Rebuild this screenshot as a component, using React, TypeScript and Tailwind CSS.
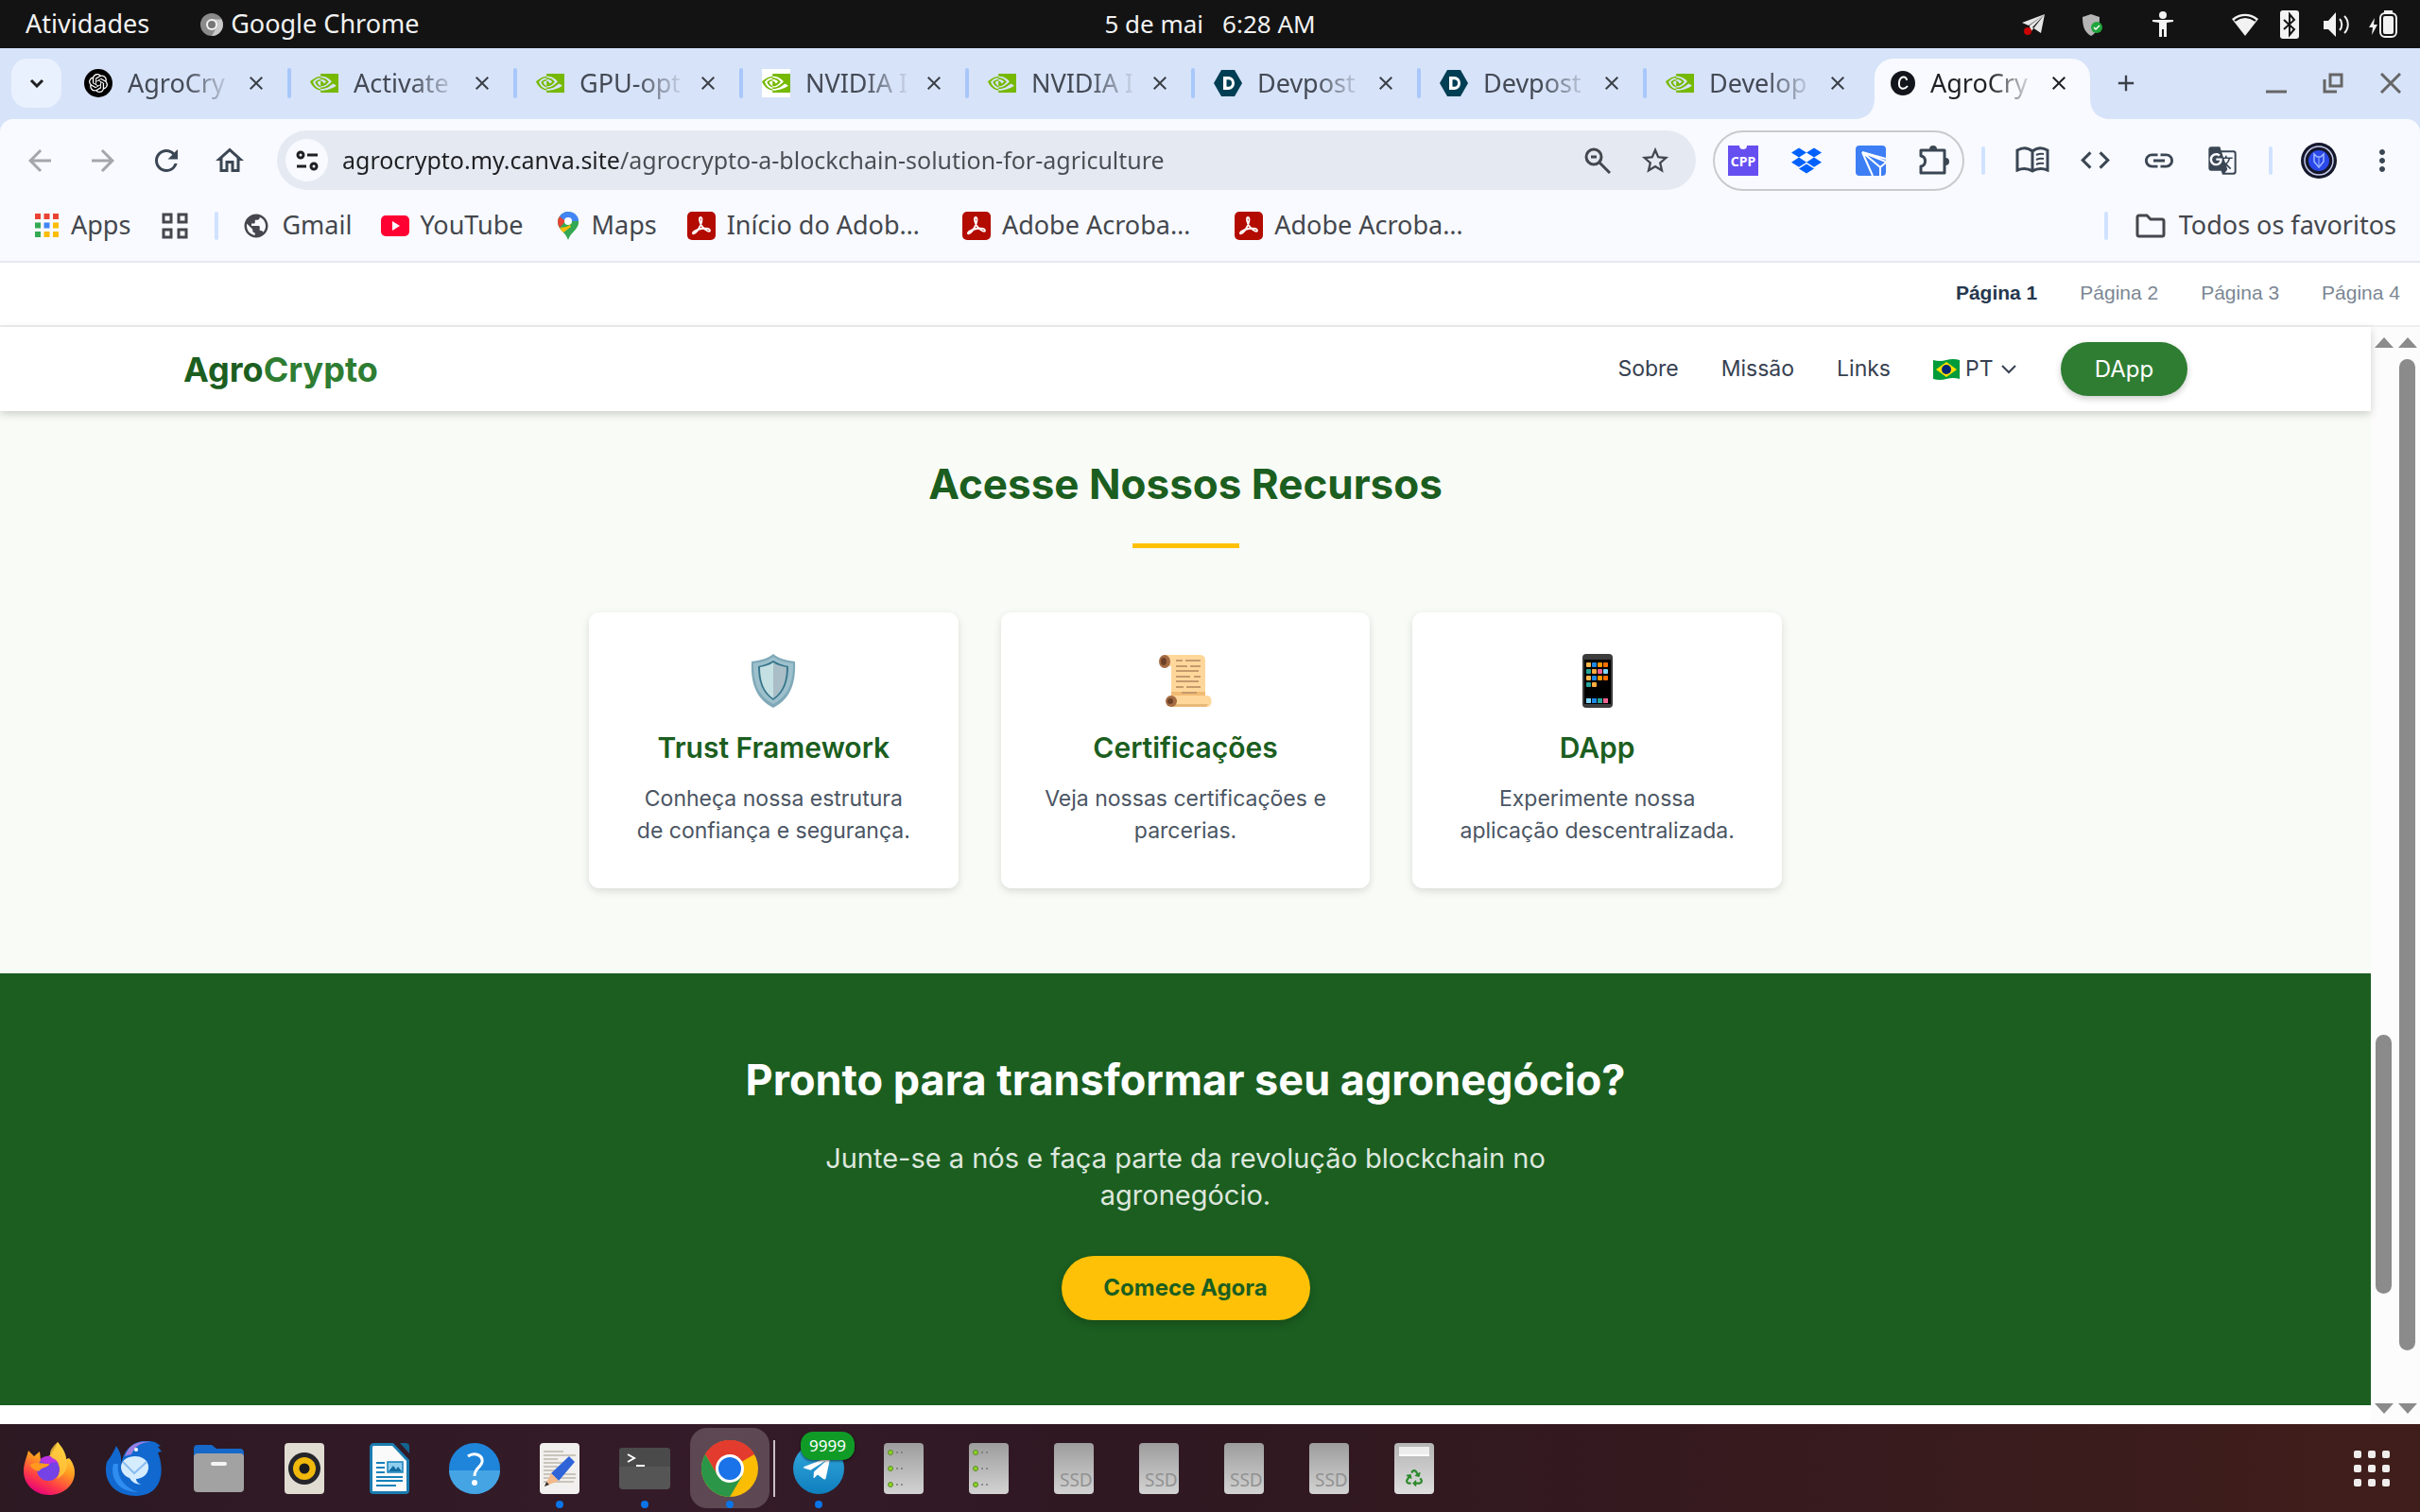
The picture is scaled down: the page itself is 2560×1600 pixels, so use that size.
import type { ReactNode } from "react"
import { SiDropbox, SiNvidia, SiOpenai } from "react-icons/si"
import { FaRecycle, FaTelegramPlane } from "react-icons/fa"
import {
  MdAdd,
  MdArrowBack,
  MdArrowForward,
  MdClose,
  MdCode,
  MdGTranslate,
  MdLink,
  MdMoreVert,
  MdOutlineHome,
  MdPublic,
  MdRefresh,
  MdStarBorder,
} from "react-icons/md"

type Tab = { title: string; icon: ReactNode }

const nvidia = <SiNvidia className="size-[30px] text-[#76b900]" />

const devpost = (
  <svg viewBox="0 0 30 30" className="size-[30px]">
    <path d="M8 1h14l8 14-8 14H8L0 15z" fill="#003e54" />
    <path d="M10 8h5.500a6.500 7 0 0 1 0 14H10zm3.500 3.300v7.400h2a3.500 3.700 0 0 0 0-7.400z" fill="#fff" />
  </svg>
)

const tabs: Tab[] = [
  {
    title: "AgroCry",
    icon: (
      <span className="flex size-[30px] items-center justify-center rounded-full bg-black">
        <SiOpenai className="size-5 text-white" />
      </span>
    ),
  },
  { title: "Activate", icon: nvidia },
  { title: "GPU-opt", icon: nvidia },
  { title: "NVIDIA I", icon: <span className="bg-white">{nvidia}</span> },
  { title: "NVIDIA I", icon: nvidia },
  { title: "Devpost", icon: devpost },
  { title: "Devpost", icon: devpost },
  { title: "Develop", icon: nvidia },
]

const resources = [
  { title: "Trust Framework", text: "Conheça nossa estrutura de confiança e segurança.", icon: <ShieldIcon /> },
  { title: "Certificações", text: "Veja nossas certificações e parcerias.", icon: <ScrollIcon /> },
  { title: "DApp", text: "Experimente nossa aplicação descentralizada.", icon: <PhoneIcon /> },
]

function ShieldIcon() {
  return (
    <svg viewBox="0 0 48 57" className="h-[57px] w-12">
      <path d="M24 0c6 5 14 7 23 8 1 22-4 39-23 49C5 47 0 30 1 8c9-1 17-3 23-8z" fill="#7fa9b8" />
      <path d="M24 3c6 4 13 6 21 7 0 19-4 34-21 43C7 44 3 29 3 10c8-1 15-3 21-7z" fill="#9dc0cc" />
      <path d="M24 7c5 3 10 5 16 6 0 16-4 28-16 36C12 41 8 29 8 13c6-1 11-3 16-6z" fill="#37768b" />
      <path d="M24 9c-4 3-9 4-14 5 0 15 4 26 14 33z" fill="#c5e0e3" />
      <path d="M24 9c4 3 9 4 14 5 0 15-4 26-14 33z" fill="#a9bec7" />
    </svg>
  )
}

function ScrollIcon() {
  return (
    <svg viewBox="0 0 57 57" className="size-[57px]">
      <path d="M7 1h37c4 0 6 2 6 6v36H14V13H7z" fill="#ffd79b" />
      <path d="M14 40h36v5H14z" fill="#f2bb72" />
      <path d="M13 44h39c6 0 6 12 0 12H13z" fill="#ffd79b" />
      <path d="M14 53h39l-2 3H13z" fill="#e8b877" />
      <ellipse cx="7" cy="8" rx="6" ry="7" fill="#a56b43" />
      <ellipse cx="6" cy="8" rx="3" ry="4" fill="#6d4228" />
      <ellipse cx="14" cy="50" rx="6" ry="6" fill="#a56b43" />
      <ellipse cx="13" cy="50" rx="3" ry="3" fill="#6d4228" />
      <path
        d="M19 7h7m3 0h16M19 13h12m3 0h11M19 18h24M19 24h15m4 0h7M19 29h24M19 35h8m3 0h15M25 41h16"
        stroke="#c49a6c"
        strokeWidth="2"
      />
    </svg>
  )
}

function PhoneIcon() {
  const colors = ["#ffb74d", "#ff6f00", "#f06292", "#1e88e5", "#26a69a", "#81d4fa", "#ff9800", "#ffab40"]
  const cells = Array.from({ length: 14 }, (_, i) => i)
  return (
    <svg viewBox="0 0 32 57" className="h-[57px] w-8">
      <rect width="32" height="57" rx="4" fill="#3c3c3c" />
      <rect x="2" y="6" width="28" height="47" fill="#000" />
      {cells.map((i) => (
        <rect key={i} x={4 + (i % 4) * 6} y={9 + Math.floor(i / 4) * 7} width="5" height="5" rx="1" fill={colors[(i * 3) % 8]} />
      ))}
      <path d="M4 47h5v5H4z" fill="#81d4fa" />
      <path d="M10 47h5v5h-5z" fill="#1e88e5" />
      <path d="M16 47h5v5h-5z" fill="#26a69a" />
      <path d="M22 47h5v5h-5z" fill="#f06292" />
    </svg>
  )
}

function TopBar() {
  return (
    <div className="grid h-[51px] grid-cols-3 items-center bg-[#131313] text-[26px] text-[#f2f2f2]">
      <div className="flex items-center pl-[27px] text-[27px]">
        <button>Atividades</button>
        <button className="ml-[54px] flex items-center gap-2">
          <svg viewBox="0 0 24 24" className="size-6">
            <circle cx="12" cy="12" r="12" fill="#8a8a8a" />
            <path d="M12 6.500h10.500A12 12 0 0 1 12 24l5-9z" fill="#c9c9c9" />
            <circle cx="12" cy="12" r="6" fill="#f2f2f2" />
            <circle cx="12" cy="12" r="4" fill="#777" />
          </svg>
          Google Chrome
        </button>
      </div>
      <button className="flex justify-center gap-5">
        <span>5 de mai</span>
        <span>6:28 AM</span>
      </button>
      <div className="flex items-center justify-end pr-6">
        <svg viewBox="0 0 24 24" className="mr-10 size-6">
          <path d="M24 1L0 10l7 3zM24 1l-4 20-9-6zM24 1L8 13l1 7 4-5z" fill="#e6e6e6" />
          <circle cx="6" cy="19" r="4" fill="#c80000" />
        </svg>
        <svg viewBox="0 0 22 24" className="mr-[52px] h-6 w-[22px]">
          <path d="M9 1l9 3c0 10-2 16-9 20C2 20 0 14 0 4z" fill="#b5b5b5" />
          <circle cx="15" cy="15" r="6" fill="#22a53c" />
          <path d="M12 15l2 2 4-4" fill="none" stroke="#fff" strokeWidth="1.500" />
        </svg>
        <svg viewBox="0 0 22 28" className="mr-[61px] h-7 w-[22px]" fill="#f2f2f2">
          <circle cx="11" cy="4" r="4" />
          <path d="M0 9h22v2l-7 1v15h-3v-8h-2v8H7V12l-7-1z" />
        </svg>
        <svg viewBox="0 0 30 24" className="mr-[22px] h-6 w-[30px]">
          <path d="M1 6C9-1 21-1 29 6L15 24z" fill="#f2f2f2" />
          <path d="M4 8c7-5 15-5 22 0" fill="none" stroke="#131313" strokeWidth="2" />
        </svg>
        <svg viewBox="0 0 20 30" className="mr-[26px] h-[30px] w-5">
          <rect width="20" height="30" rx="3" fill="#f2f2f2" />
          <path d="M4 10l11 10-5 6V4l5 6L4 20" fill="none" stroke="#131313" strokeWidth="2" />
        </svg>
        <svg viewBox="0 0 28 26" className="mr-5 h-[26px] w-7">
          <path d="M0 9h5l8-9v26l-8-8H0z" fill="#f2f2f2" />
          <path d="M17 7c3 3 3 9 0 12M22 4c5 5 5 13 0 18" fill="none" stroke="#f2f2f2" strokeWidth="2" />
        </svg>
        <svg viewBox="0 0 30 30" className="size-[30px]">
          <path d="M6 8L0 18h4l-1 8 6-11H5z" fill="#f2f2f2" />
          <rect x="12" y="3" width="17" height="25" rx="5" fill="none" stroke="#f2f2f2" strokeWidth="2" />
          <path d="M16 0h9v3h-9z" fill="#f2f2f2" />
          <rect x="15" y="6" width="11" height="19" rx="2" fill="#f2f2f2" />
        </svg>
      </div>
    </div>
  )
}

function TabStrip() {
  return (
    <div className="flex h-[75px] bg-[#d7e3f9] pt-[11px]">
      <button aria-label="Pesquisar guias" className="ml-3 flex h-[52px] w-[53px] items-center justify-center rounded-[17px] bg-[#eaf1fe]">
        <svg viewBox="0 0 16 10" className="h-2.5 w-4">
          <path d="M2 2l6 6 6-6" fill="none" stroke="#1f2023" strokeWidth="3" />
        </svg>
      </button>
      <div className="ml-1 flex flex-1">
        {tabs.map((tab, i) => (
          <div key={i} className="flex h-[52px] min-w-0 flex-1 items-center pl-5">
            {tab.icon}
            <span className="ml-4 w-[112px] overflow-hidden text-[27px] whitespace-nowrap text-[#444a55] [mask-image:linear-gradient(90deg,#000_55%,transparent)]">
              {tab.title}
            </span>
            <button aria-label="Fechar guia" className="ml-3">
              <MdClose className="size-6 text-[#3b4048]" />
            </button>
            <span className={i < 7 ? "ml-auto h-8 w-1 rounded-full bg-[#a8c7fa]" : "hidden"} />
          </div>
        ))}
      </div>
      <div className="relative ml-0.5 flex h-16 w-[228px] items-center rounded-t-[20px] bg-[#f8faff] pb-3 pl-[17px]">
        <svg viewBox="0 0 22 22" className="absolute bottom-0 -left-[22px] size-[22px]">
          <path d="M22 0v22H0C14 22 22 14 22 0z" fill="#f8faff" />
        </svg>
        <svg viewBox="0 0 22 22" className="absolute -right-[22px] bottom-0 size-[22px]">
          <path d="M0 0v22h22C8 22 0 14 0 0z" fill="#f8faff" />
        </svg>
        <svg viewBox="0 0 26 26" className="size-[26px]">
          <circle cx="13" cy="13" r="13" fill="#12161c" />
          <path d="M17 10c0-5-7-5-8 2s5 9 9 4" fill="none" stroke="#fff" strokeWidth="2" />
        </svg>
        <span className="ml-4 w-[112px] overflow-hidden text-[27px] whitespace-nowrap text-[#1f2023] [mask-image:linear-gradient(90deg,#000_55%,transparent)]">
          AgroCry
        </span>
        <button aria-label="Fechar guia" className="ml-3">
          <MdClose className="size-6 text-[#1f2023]" />
        </button>
      </div>
      <div className="flex h-[52px] w-[349px] items-center pr-5 pl-6">
        <button aria-label="Nova guia">
          <MdAdd className="size-7 text-[#3b4048]" />
        </button>
        <svg viewBox="0 0 22 22" className="ml-auto size-[22px]">
          <path d="M0 20h22" stroke="#666" strokeWidth="3" />
        </svg>
        <svg viewBox="0 0 22 22" className="ml-[38px] size-[22px]" fill="none" stroke="#666" strokeWidth="3">
          <path d="M8 2h12v12H8zM2 7v13h13" />
        </svg>
        <svg viewBox="0 0 22 22" className="ml-[39px] size-[22px]">
          <path d="M1 1l20 20M21 1L1 21" stroke="#666" strokeWidth="3" />
        </svg>
      </div>
    </div>
  )
}

function Toolbar() {
  return (
    <div className="bg-[#d7e3f9]">
      <div className="flex h-[87px] items-center rounded-t-[14px] bg-[#f8faff] pr-[22px] pl-6 text-[#3b4654]">
        <button aria-label="Voltar">
          <MdArrowBack className="size-9 text-[#a3a6ab]" />
        </button>
        <button aria-label="Avançar" className="ml-[31px]">
          <MdArrowForward className="size-9 text-[#a3a6ab]" />
        </button>
        <button aria-label="Recarregar" className="ml-[31px]">
          <MdRefresh className="size-9" />
        </button>
        <button aria-label="Página inicial" className="ml-[31px]">
          <MdOutlineHome className="size-9" />
        </button>
        <div className="ml-8 flex h-[63px] flex-1 items-center rounded-full bg-[#e5eaf2] pr-[26px] pl-[9px]">
          <button aria-label="Informações do site" className="flex size-[45px] items-center justify-center rounded-full bg-[#f8faff]">
            <svg viewBox="0 0 24 24" className="size-6" fill="none" stroke="#1f2023" strokeWidth="3">
              <circle cx="5" cy="6" r="3" />
              <path d="M12 6h11M1 18h10" />
              <circle cx="19" cy="18" r="3" />
            </svg>
          </button>
          <input
            aria-label="Endereço"
            defaultValue="agrocrypto.my.canva.site/agrocrypto-a-blockchain-solution-for-agriculture"
            className="ml-[15px] min-w-0 flex-1 bg-[linear-gradient(90deg,#1f2023_293px,#4a4d52_293px)] bg-clip-text text-[25px] text-transparent outline-none"
          />
          <svg viewBox="0 0 28 28" className="size-7" fill="none" stroke="#44474d" strokeWidth="3">
            <circle cx="10" cy="10" r="8" />
            <path d="M16 16l11 11M7 10h6" />
          </svg>
          <button aria-label="Favoritar" className="ml-[30px]">
            <MdStarBorder className="size-[34px] text-[#44474d]" />
          </button>
        </div>
        <div className="ml-[18px] flex h-16 w-[266px] items-center justify-between rounded-full border-2 border-[#c9cacd] px-3.5">
          <svg viewBox="0 0 32 32" className="size-8">
            <path d="M0 0h12a4 4 0 0 0 8 0h12v32H0z" fill="#654ff0" />
            <text x="16" y="22" textAnchor="middle" fill="#fff" fontSize="14" fontWeight="700" fontFamily="Noto Sans">
              CPP
            </text>
          </svg>
          <SiDropbox className="size-8 text-[#0061fe]" />
          <svg viewBox="0 0 32 32" className="size-8">
            <rect width="32" height="32" rx="4" fill="#3d7ef5" />
            <path d="M7 7l25 7M7 7l19 16M7 7l11 25M26 23l6-5M26 23v9M7 7l25 10" fill="none" stroke="#fff" strokeWidth="2" />
          </svg>
          <svg viewBox="0 0 32 32" className="size-8" fill="none" stroke="#3b4654" strokeWidth="3">
            <path d="M2 5h25v24H2v-7c6-1 6-10 0-11z" strokeLinejoin="round" />
            <path d="M12 4a3 3 0 0 1 6 0zM28 14a3 3 0 0 1 0 6z" fill="#3b4654" strokeWidth="2" />
          </svg>
        </div>
        <span className="ml-[18px] h-[30px] w-1 rounded-full bg-[#d0e2ff]" />
        <svg viewBox="0 0 36 30" className="ml-8 h-[30px] w-9" fill="none" stroke="#3b4654" strokeWidth="3">
          <path d="M18 5C13 1 7 1 2 4v21c5-2 11-2 16 1 5-3 11-3 16-1V4c-5-3-11-3-16 1zv21" />
          <path d="M22 9q4-2 8-1M22 14q4-2 8-1M22 19q4-2 8-1" strokeWidth="2" />
        </svg>
        <MdCode className="ml-[30px] size-[37px]" />
        <MdLink className="ml-[31px] size-9" />
        <MdGTranslate className="ml-[33px] size-8" />
        <span className="ml-[33px] h-[30px] w-1 rounded-full bg-[#d0e2ff]" />
        <svg viewBox="0 0 38 38" className="ml-[30px] size-[38px]">
          <circle cx="19" cy="19" r="19" fill="#15172c" />
          <circle cx="19" cy="19" r="15" fill="none" stroke="#c5cbe8" strokeWidth="1.500" />
          <circle cx="19" cy="19" r="11" fill="#2b49e8" />
          <path d="M14 12l3 3h4l3-3v8l-5 6-5-6z" fill="none" stroke="#9db8ff" strokeWidth="1.500" />
          <path d="M19 16v9" stroke="#9db8ff" />
        </svg>
        <button aria-label="Menu" className="ml-[30px]">
          <MdMoreVert className="size-9" />
        </button>
      </div>
    </div>
  )
}

function AcrobatIcon() {
  return (
    <svg viewBox="0 0 30 30" className="size-[30px]">
      <rect width="30" height="30" rx="5" fill="#b30b00" />
      <path
        d="M14 6c3 0 1 8-2 12-2 4-5 6-6 5s3-4 9-5 9 0 9 2-5 0-8-4-4-10-2-10z"
        fill="none"
        stroke="#fff"
        strokeWidth="1.800"
      />
    </svg>
  )
}

function BookmarksBar() {
  const dots = ["#ea4335", "#ea4335", "#ea4335", "#34a853", "#4285f4", "#fbbc04", "#34a853", "#fbbc04", "#fbbc04"]
  return (
    <div className="flex h-[65px] items-center border-b-2 border-[#e4e9f1] bg-[#f8faff] pr-[25px] pb-3 pl-[37px] text-[27px] text-[#44474d]">
      <a href="#apps" className="flex items-center gap-[13px]">
        <svg viewBox="0 0 25 25" className="size-[25px]">
          {dots.map((color, i) => (
            <rect key={i} x={(i % 3) * 9.5} y={Math.floor(i / 3) * 9.5} width="6" height="6" fill={color} />
          ))}
        </svg>
        Apps
      </a>
      <svg viewBox="0 0 28 28" className="ml-[33px] size-7" fill="none" stroke="#44474d" strokeWidth="3">
        <path d="M2 2h8v8H2zM18 2h8v8h-8zM2 18h8v8H2zM18 18h8v8h-8z" />
      </svg>
      <span className="ml-7 h-[30px] w-1 rounded-full bg-[#d0e2ff]" />
      <a href="#gmail" className="ml-[25px] flex items-center gap-3">
        <MdPublic className="size-[30px]" />
        Gmail
      </a>
      <a href="#youtube" className="ml-[31px] flex items-center gap-[11px]">
        <svg viewBox="0 0 30 22" className="h-[22px] w-[30px]">
          <rect width="30" height="22" rx="5" fill="#ff0033" />
          <path d="M12 6v10l8-5z" fill="#fff" />
        </svg>
        YouTube
      </a>
      <a href="#maps" className="ml-9 flex items-center gap-3.5">
        <svg viewBox="0 0 22 30" className="h-[30px] w-[22px]">
          <path d="M11 0C5 0 0 5 0 11c0 8 8 10 11 19 3-9 11-11 11-19 0-6-5-11-11-11z" fill="#34a853" />
          <path d="M2 5c-3 4-2 9 0 12L9 9z" fill="#ea4335" />
          <path d="M2 17l3 3L15 14l-5 2z" fill="#fbbc04" />
          <path d="M11 0C7 0 4 2 2 5l6 5 14 0c0-6-5-10-11-10z" fill="#4285f4" />
          <path d="M22 10c0 6-4 8-6 12L9 16z" fill="#34a853" />
          <path d="M13 14l-10 5 3 3 8-6z" fill="#fbbc04" />
          <circle cx="11" cy="10" r="4" fill="#fff" />
        </svg>
        Maps
      </a>
      <a href="#acrobat-1" className="ml-8 flex items-center gap-3">
        <AcrobatIcon />
        Início do Adob…
      </a>
      <a href="#acrobat-2" className="ml-[45px] flex items-center gap-3">
        <AcrobatIcon />
        Adobe Acroba…
      </a>
      <a href="#acrobat-3" className="ml-[47px] flex items-center gap-3">
        <AcrobatIcon />
        Adobe Acroba…
      </a>
      <span className="ml-auto h-[30px] w-1 rounded-full bg-[#d0e2ff]" />
      <button className="ml-[29px] flex items-center gap-3.5">
        <svg viewBox="0 0 32 26" className="h-[26px] w-8" fill="none" stroke="#44474d" strokeWidth="3">
          <path d="M2 4q0-2 2-2h8l4 4h12q2 0 2 2v14q0 2-2 2H4q-2 0-2-2z" />
        </svg>
        Todos os favoritos
      </button>
    </div>
  )
}

function Scrollbar({ spacer, thumb }: { spacer: string; thumb: string }) {
  return (
    <div className="flex flex-1 flex-col items-center pt-[11px] pb-[11px]">
      <svg viewBox="0 0 20 11" className="h-[11px] w-5">
        <path d="M0 11L10 0l10 11z" fill="#8b8b8b" />
      </svg>
      <div className={`w-[17px] ${spacer}`} />
      <div className={`w-[17px] rounded-full bg-[#8b8b8b] ${thumb}`} />
      <svg viewBox="0 0 20 11" className="mt-auto h-[11px] w-5">
        <path d="M0 0l10 11L20 0z" fill="#8b8b8b" />
      </svg>
    </div>
  )
}

function Site() {
  return (
    <div className="min-w-0 flex-1 font-['Inter',sans-serif]">
      <header className="relative flex h-[89px] items-center bg-white pr-[194px] pl-[194px] text-[23px] text-[#374151] shadow-[0_3px_9px_rgba(0,0,0,0.18)]">
        <a href="#inicio" className="text-[36px] font-bold text-[#1b5e20]">
          Agro<span className="text-[#2e7d32]">Crypto</span>
        </a>
        <nav className="ml-auto flex items-center gap-[45px]">
          <a href="#sobre">Sobre</a>
          <a href="#missao">Missão</a>
          <a href="#links">Links</a>
          <label className="flex items-center">
            <svg viewBox="0 0 28 22" className="h-[22px] w-7">
              <path d="M0 1q7 2 14 0t14 0v20q-7-2-14 0T0 21z" fill="#009b3a" />
              <path d="M14 3l11 8-11 8L3 11z" fill="#fedf00" />
              <circle cx="14" cy="11" r="5" fill="#002776" />
            </svg>
            <select aria-label="Idioma" className="ml-1.5 appearance-none outline-none">
              <option>PT</option>
            </select>
            <svg viewBox="0 0 16 10" className="mr-0.5 ml-2 h-2.5 w-4">
              <path d="M1 1l7 7 7-7" fill="none" stroke="#374151" strokeWidth="2" />
            </svg>
          </label>
          <button className="h-[57px] w-[134px] rounded-full bg-[#2e7d32] text-[24px] text-white shadow-[0_3px_7px_rgba(0,0,0,0.2)]">
            DApp
          </button>
        </nav>
      </header>
      <section className="flex flex-col items-center bg-[#f9fbf6] pt-[50px] pb-[90px]">
        <h2 className="text-[44px] leading-[54px] font-bold text-[#1b5e20]">Acesse Nossos Recursos</h2>
        <div className="mt-9 h-[5px] w-[113px] bg-[#ffc107]" />
        <div className="mt-[68px] grid w-full max-w-[1262px] grid-cols-3 gap-[45px] text-center">
          {resources.map((item) => (
            <a key={item.title} href="#recursos" className="flex flex-col items-center rounded-[11px] bg-white p-11 shadow-[0_3px_8px_rgba(0,0,0,0.13)]">
              {item.icon}
              <h3 className="mt-[22px] text-[30px] leading-10 font-semibold text-[#1b5e20]">{item.title}</h3>
              <p className="mt-[17px] text-[23px] leading-[34px] text-[#4b5563]">{item.text}</p>
            </a>
          ))}
        </div>
      </section>
      <section className="flex flex-col items-center bg-[#1b5e20] pt-[86px] pb-[90px] text-center">
        <h2 className="text-[45px] leading-[54px] font-bold text-white">Pronto para transformar seu agronegócio?</h2>
        <p className="mt-9 max-w-[860px] text-[29px] leading-[39px] text-[#dde7dd]">
          Junte-se a nós e faça parte da revolução blockchain no agronegócio.
        </p>
        <button className="mt-[45px] h-[68px] w-[263px] rounded-full bg-[#ffc107] text-[24px] font-bold text-[#1b5e20] shadow-[0_4px_8px_rgba(0,0,0,0.2)]">
          Comece Agora
        </button>
      </section>
    </div>
  )
}

function DockItem({ children, label, running, active }: { children: ReactNode; label: string; running?: boolean; active?: boolean }) {
  return (
    <button aria-label={label} className="relative flex h-full w-[90px] items-center justify-center">
      {active && <span className="absolute inset-x-[3px] top-1 bottom-1 rounded-[18px] bg-white/20" />}
      <span className="relative">{children}</span>
      {running && <span className="absolute bottom-1 size-2 rounded-full bg-[#0a74e8]" />}
    </button>
  )
}

function ServerIcon() {
  return (
    <svg viewBox="0 0 42 54" className="h-[54px] w-[42px]">
      <defs>
        <linearGradient id="metal" x2="0" y2="1">
          <stop stopColor="#9d9d9d" />
          <stop offset="1" stopColor="#d3d3d3" />
        </linearGradient>
      </defs>
      <rect width="42" height="54" rx="4" fill="url(#metal)" />
      {[10, 27, 44].map((y) => (
        <g key={y}>
          <circle cx="7" cy={y} r="2.500" fill="#8ed32b" stroke="#5c8a20" />
          <path d={`M13 ${y}h2m3 0h2`} stroke="#777" strokeWidth="1.500" />
        </g>
      ))}
    </svg>
  )
}

function SsdIcon() {
  return (
    <svg viewBox="0 0 42 54" className="h-[54px] w-[42px]">
      <rect width="42" height="54" rx="4" fill="url(#metal)" />
      <text x="6" y="46" fill="#929292" fontSize="19" fontFamily="Noto Sans">
        SSD
      </text>
    </svg>
  )
}

function Dock() {
  return (
    <div className="flex h-[93px] items-center bg-[linear-gradient(90deg,#2c1922,#351b29_30%,#2f1822_45%,#33191f_65%,#401e1b)] pl-[7px]">
      <DockItem label="Firefox">
        <svg viewBox="0 0 54 56" className="h-14 w-[54px]">
          <defs>
            <linearGradient id="fire" x1="0.8" x2="0.3" y2="1">
              <stop stopColor="#fff44f" />
              <stop offset="0.45" stopColor="#ff9a1f" />
              <stop offset="0.75" stopColor="#ff3b47" />
              <stop offset="1" stopColor="#e5007d" />
            </linearGradient>
          </defs>
          <path d="M36 0c4 5 8 9 9 18l3-1c4 4 6 10 6 15 0 14-12 24-27 24S0 45 0 31c0-8 3-14 5-22l6 6 6-5 1 9c5-2 10-4 12-8 2-3 4-6 6-11z" fill="url(#fire)" />
          <circle cx="26" cy="29" r="12" fill="#7542e5" />
          <path d="M17 19c6-7 17-5 20 4-5-3-9-1-11 2z" fill="#b833e1" />
          <path d="M7 24c6-4 12-1 20-1 0 4-8 3-11 8-3-1-8-3-9-7z" fill="#ff9a1f" />
          <path d="M36 0c-8 7-10 12-6 17 10 3 10 15 5 22 9-5 13-11 10-22-1-7-6-11-9-17z" fill="#ffc83d" fillOpacity="0.8" />
        </svg>
      </DockItem>
      <DockItem label="Thunderbird">
        <svg viewBox="0 0 60 58" className="h-[58px] w-[60px]">
          <path d="M1 22c3-4 6-8 10-17 4 6 6 11 5 20C19 6 33-4 52 1l6 4-3 1 4 5-4 1c8 20 4 46-23 46C9 58-4 42 1 22z" fill="#1168cf" />
          <path d="M8 24C4 40 14 54 34 54c-9-3-17-9-20-18-1-5-2-8-1-12z" fill="#2f8df0" />
          <path d="M20 16C24 4 34-1 47 1c-11 0-16 5-20 13z" fill="#9a7fe0" />
          <path d="M16 27c1-14 27-15 29-1 1 9-7 14-13 14 0 3 2 4 5 6-8-1-10-4-12-7-5-2-9-6-9-12z" fill="#d5ecff" />
          <path d="M18 22l12 12 13-12" fill="none" stroke="#8abcf0" strokeWidth="2" />
          <circle cx="32" cy="9" r="2" fill="#fff" />
        </svg>
      </DockItem>
      <DockItem label="Arquivos">
        <svg viewBox="0 0 54 50" className="h-[50px] w-[54px]">
          <path d="M4 0h15l5 4h25q4 0 4 5v10H0V4q0-4 4-4z" fill="#1668c9" />
          <rect y="9" width="53" height="41" rx="4" fill="#a2a2a2" />
          <rect x="18" y="18" width="17" height="4" rx="2" fill="#f5f5f5" />
        </svg>
      </DockItem>
      <DockItem label="Rhythmbox">
        <svg viewBox="0 0 42 54" className="h-[54px] w-[42px]">
          <rect width="42" height="54" rx="4" fill="#e1dcd2" />
          <circle cx="21" cy="27" r="17" fill="#25262b" />
          <circle cx="21" cy="27" r="12" fill="#f0b90b" />
          <circle cx="21" cy="27" r="5.500" fill="#1b1c1e" />
        </svg>
      </DockItem>
      <DockItem label="LibreOffice Writer">
        <svg viewBox="0 0 42 54" className="h-[54px] w-[42px]">
          <path d="M5 0h20l17 18v32q0 4-4 4H4q-4 0-4-4V5q0-5 5-5z" fill="#1a7cb0" />
          <path d="M4 3h20l15 16v32H3V4z" fill="#fafafa" />
          <path d="M32 0h6q4 0 4 4v7z" fill="#12638f" />
          <path d="M7 21h9M7 26h9M7 31h9M7 36h28M7 40h28M7 45h21" stroke="#1681bb" strokeWidth="2" />
          <rect x="19" y="20" width="16" height="11" fill="#8fcdee" stroke="#1681bb" strokeWidth="1.500" />
          <path d="M20 30l5-6 3 4 2-3 4 5z" fill="#0f6ba0" />
        </svg>
      </DockItem>
      <DockItem label="Ajuda">
        <svg viewBox="0 0 54 54" className="size-[54px]">
          <circle cx="27" cy="27" r="27" fill="#1f85db" />
          <path d="M0 29a27 25 0 0 0 54 0z" fill="#45a4e4" />
          <path d="M20 14c7-5 16-1 15 6-1 6-8 6-8 15" fill="none" stroke="#fff" strokeWidth="3" />
          <circle cx="27" cy="42" r="3" fill="#fff" />
        </svg>
      </DockItem>
      <DockItem label="Editor de texto" running>
        <svg viewBox="0 0 42 54" className="h-[54px] w-[42px]">
          <rect width="42" height="54" rx="4" fill="#f1f0ee" />
          <path d="M4 9h21M4 13h34M4 17h15M4 21h28M4 25h15M4 29h20M4 33h34M4 37h34M4 41h32" stroke="#c9c5bb" strokeWidth="2" />
          <path d="M12 32L31 14l6 6-17 20z" fill="#2f63d8" />
          <path d="M12 32l8 8-15 6z" fill="#f3b98a" />
          <path d="M7 41l3 3-5 2z" fill="#333" />
        </svg>
      </DockItem>
      <DockItem label="Terminal" running>
        <svg viewBox="0 0 54 44" className="h-11 w-[54px]">
          <rect width="54" height="44" rx="4" fill="#555" />
          <path d="M4 0h46q4 0 4 4v16H0V4q0-4 4-4z" fill="#4a4a4a" />
          <path d="M9 7l7 4-7 4M18 19h9" fill="none" stroke="#fff" strokeWidth="2" />
        </svg>
      </DockItem>
      <DockItem label="Google Chrome" running active>
        <svg viewBox="0 0 60 60" className="size-[60px]">
          <circle cx="30" cy="30" r="30" fill="#fbbc04" />
          <path d="M30 30L4 15a30 30 0 0 1 52 0z" fill="#e33b2e" />
          <path d="M30 15h26a30 30 0 0 0-52 0l13 22z" fill="#e33b2e" />
          <path d="M4 15a30 30 0 0 0 26 45l13-22-26-1z" fill="#2b9648" />
          <circle cx="30" cy="30" r="15" fill="#fff" />
          <circle cx="30" cy="30" r="12" fill="#1a73e8" />
        </svg>
      </DockItem>
      <span className="mx-px h-[60px] w-0.5 bg-[#c9c0c4]" />
      <DockItem label="Telegram" running>
        <span className="flex size-[54px] items-center justify-center rounded-full bg-linear-to-b from-[#34aadf] to-[#0d7fbd]">
          <FaTelegramPlane className="mr-1 size-8 text-white" />
        </span>
        <span className="absolute -top-3 left-2 flex h-[30px] w-[57px] items-center justify-center rounded-[13px] bg-[#109b27] text-[17px] text-white shadow-[0_1px_3px_rgba(0,0,0,0.6)]">
          9999
        </span>
      </DockItem>
      <DockItem label="Servidor 1">
        <ServerIcon />
      </DockItem>
      <DockItem label="Servidor 2">
        <ServerIcon />
      </DockItem>
      {[1, 2, 3, 4].map((n) => (
        <DockItem key={n} label={`Disco ${n}`}>
          <SsdIcon />
        </DockItem>
      ))}
      <DockItem label="Lixeira">
        <span className="flex h-[54px] w-[42px] flex-col items-center justify-between rounded-[4px] bg-linear-to-b from-[#b5b5b5] to-[#dedede] pt-1 pb-2">
          <span className="h-2.5 w-8 border-b-2 border-white bg-[#ededed]" />
          <FaRecycle className="size-[18px] text-[#2c8a2c]" />
        </span>
      </DockItem>
      <button aria-label="Mostrar aplicativos" className="mr-8 ml-auto grid grid-cols-3 gap-[7px]">
        {Array.from({ length: 9 }, (_, i) => (
          <span key={i} className="size-2 rounded-[2px] bg-[#f0eeec]" />
        ))}
      </button>
    </div>
  )
}

export default function App() {
  return (
    <div className="flex min-h-screen flex-col bg-white font-['Noto_Sans',sans-serif]">
      <TopBar />
      <TabStrip />
      <Toolbar />
      <BookmarksBar />
      <nav className="flex h-[68px] items-center justify-end gap-[45px] border-b-2 border-[#efefef] bg-white pr-[21px] pb-0.5 font-['Liberation_Sans',sans-serif] text-[21px] text-[#7b8794]">
        <a href="#p1" className="font-bold text-[#26374d]">Página 1</a>
        <a href="#p2">Página 2</a>
        <a href="#p3">Página 3</a>
        <a href="#p4">Página 4</a>
      </nav>
      <main className="flex flex-1">
        <Site />
        <div className="flex w-[52px] bg-[#fcfcfc] px-px">
          <Scrollbar spacer="h-[63.8%]" thumb="h-[24.1%]" />
          <Scrollbar spacer="h-3" thumb="h-[92.1%]" />
        </div>
      </main>
      <Dock />
    </div>
  )
}
